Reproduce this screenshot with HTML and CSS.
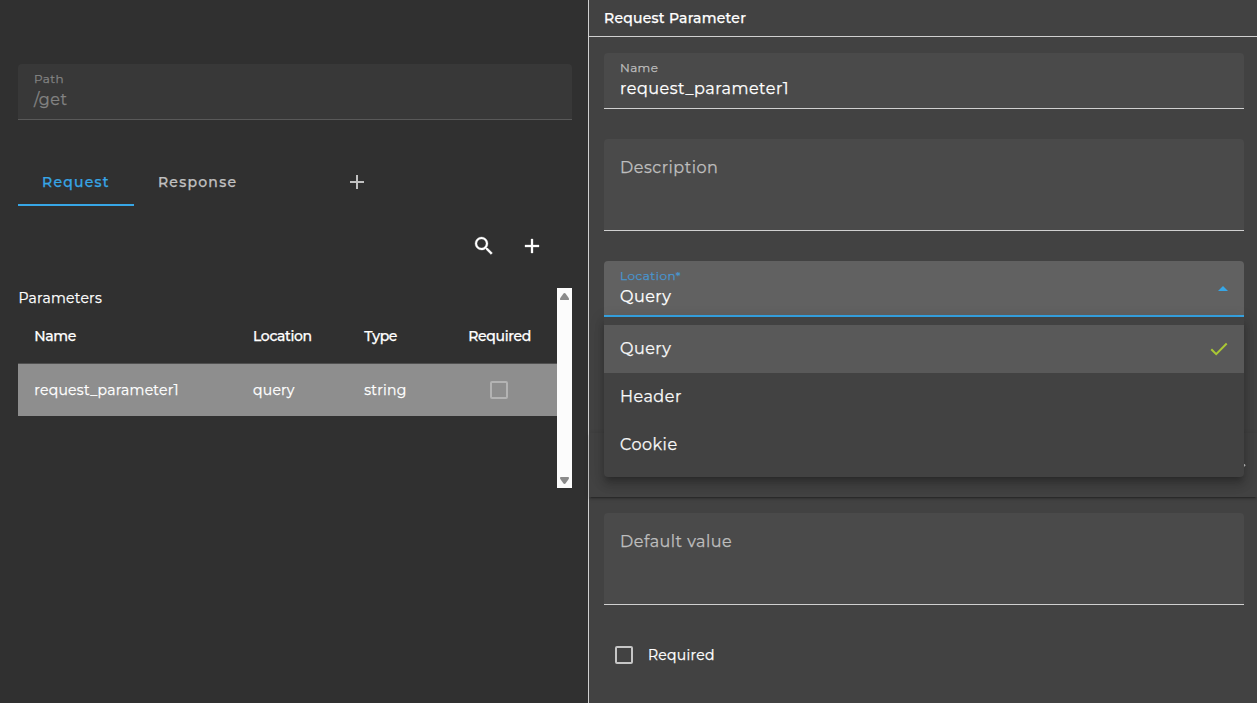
FILE: index.html
```html
<!DOCTYPE html>
<html lang="en">
<head>
<meta charset="utf-8">
<title>Request Parameter</title>
<link rel="stylesheet" href="styles.css">
</head>
<body>
<div class="app">
  <main class="editor">
    <div class="field field--disabled">
      <span class="field__label">Path</span>
      <span class="field__value">/get</span>
    </div>
    <nav class="tabs">
      <div class="tab tab--active">Request</div>
      <div class="tab">Response</div>
      <div class="tab tab--add">
        <svg class="icon" viewBox="0 0 24 24"><path d="M19 13h-6v6h-2v-6H5v-2h6V5h2v6h6v2z"/></svg>
      </div>
    </nav>
    <div class="toolbar">
      <svg class="icon icon--bold" viewBox="0 0 24 24"><path d="M15.5 14h-.79l-.28-.27A6.471 6.471 0 0 0 16 9.5 6.5 6.5 0 1 0 9.5 16c1.61 0 3.09-.59 4.23-1.57l.27.28v.79l5 4.99L20.49 19l-4.99-5zm-6 0C7.01 14 5 11.99 5 9.5S7.01 5 9.5 5 14 7.01 14 9.5 11.99 14 9.5 14z"/></svg>
      <svg class="icon icon--bold" viewBox="0 0 24 24"><path d="M19 13h-6v6h-2v-6H5v-2h6V5h2v6h6v2z"/></svg>
    </div>
    <section class="params">
      <div class="params__content">
        <div class="params__title">Parameters</div>
        <div class="row row--head">
          <span>Name</span><span>Location</span><span>Type</span><span>Required</span>
        </div>
        <div class="row row--selected">
          <span>request_parameter1</span><span>query</span><span>string</span><span><i class="checkbox checkbox--disabled"></i></span>
        </div>
      </div>
      <div class="scrollbar">
        <svg class="scrollbar__arrow" viewBox="0 0 9 7"><path d="M4.5 0Q5.2 0 5.7.7L8.7 5Q9.6 7 8 7H1Q-.6 7 .3 5L3.3.7Q3.8 0 4.5 0z"/></svg>
        <svg class="scrollbar__arrow scrollbar__arrow--down" viewBox="0 0 9 7"><path d="M4.5 0Q5.2 0 5.7.7L8.7 5Q9.6 7 8 7H1Q-.6 7 .3 5L3.3.7Q3.8 0 4.5 0z"/></svg>
      </div>
    </section>
  </main>
  <aside class="details">
    <header class="details__header">Request Parameter</header>
    <div class="details__body">
      <div class="field">
        <span class="field__label">Name</span>
        <span class="field__value">request_parameter1</span>
      </div>
      <div class="field field--area">Description</div>
      <div class="select">
        <div class="field field--focused">
          <span class="field__label">Location*</span>
          <span class="field__value">Query</span>
          <svg class="field__arrow" viewBox="0 0 10 5"><path d="M0 5l5-5 5 5z"/></svg>
        </div>
        <div class="menu">
          <div class="option option--selected">Query
            <svg class="option__check" viewBox="0 0 18 14"><path d="M1.3 7.2l4.9 4.9L16.7 1.5"/></svg>
          </div>
          <div class="option">Header</div>
          <div class="option">Cookie</div>
        </div>
      </div>
    </div>
    <div class="expander"><svg viewBox="0 0 10 6"><path d="M1 .5l4 4 4-4"/></svg></div>
    <div class="details__footer">
      <div class="field field--area">Default value</div>
      <div class="check-row"><i class="checkbox"></i>Required</div>
    </div>
  </aside>
</div>
</body>
</html>
```
FILE: styles.css
```css
* { box-sizing: border-box; }

body {
  margin: 0;
  background: #303030;
  color: #fff;
  font: 400 14px/20px Montserrat, "Open Sans", sans-serif;
  letter-spacing: .25px;
  -webkit-text-stroke: .25px currentColor;
}

.app { display: flex; height: 703px; overflow: hidden; }

.editor { width: 588px; padding: 64px 16px 0 18px; }

.icon { display: block; width: 24px; height: 24px; fill: currentColor; }
.icon--bold { stroke: currentColor; stroke-width: .3; }

/* Filled form fields */
.field {
  display: flex;
  flex-direction: column;
  position: relative;
  height: 56px;
  padding: 5px 16px 0;
  border-radius: 4px 4px 0 0;
  border-bottom: 1px solid #d0d0d0;
  background: #4a4a4a;
  font-size: 16px;
  letter-spacing: .5px;
}
.field__label { color: #bebebe; font-size: 12px; line-height: 20px; letter-spacing: .375px; }
.field__value { line-height: 22px; }
.field--disabled { background: #383838; border-color: #595959; color: #838383; }
.field--disabled .field__label { color: #838383; }
.field--area { height: 92px; padding-top: 19px; color: #bebebe; }
.field--focused { background: #616161; border-bottom: 2px solid #37a6e6; }
.field--focused .field__label { color: #4896d0; letter-spacing: .5px; }
.field__arrow { position: absolute; right: 16px; top: 25px; width: 10px; height: 5px; fill: #37a6e6; }

.tabs { display: flex; height: 48px; margin-top: 38px; }
.tab {
  padding: 14px 24px 0;
  color: #c1c1c1;
  font-weight: 500;
  letter-spacing: 1.25px;
}
.tab--active { color: #37a6e6; border-bottom: 2px solid #37a6e6; }
.tab--add { padding: 12px 0 0 84px; }

.toolbar { display: flex; justify-content: flex-end; gap: 24px; padding: 28px 28px 0 0; height: 82px; }

.params { display: flex; height: 200px; }
.params__content { flex: 1; }
.params__title { height: 20px; padding-left: .5px; }
.row {
  display: grid;
  grid-template-columns: 218.7px 111.3px 104px 1fr;
  align-items: center;
  height: 53px;
  padding-left: 16.3px;
}
.row--head { height: 55px; padding-top: 1px; font-weight: 500; letter-spacing: -.35px; }
.row--selected { background: #8e8e8e; border-top: 1px solid #505050; }
.row--selected .checkbox { margin-left: 21.7px; }

.checkbox { display: block; width: 18px; height: 18px; border: 2px solid #c6c6c6; border-radius: 2px; }
.checkbox--disabled { border-color: #b3b3b3; }

.scrollbar {
  display: flex;
  flex-direction: column;
  align-items: center;
  justify-content: space-between;
  width: 15px;
  padding: 5px 0 4px;
  background: #fcfcfc;
}
.scrollbar__arrow { width: 9px; height: 7px; fill: #8b8b8b; }
.scrollbar__arrow--down { transform: rotate(180deg); }

.details { flex: 1; border-left: 1px solid #d0d0d0; background: #424242; }
.details__header { height: 37px; padding: 8px 15px; border-bottom: 1px solid #d0d0d0; font-weight: 500; }
.details__body { display: flex; flex-direction: column; gap: 30px; padding: 16px 13px 0 15px; }

.select { position: relative; }
.menu {
  position: absolute;
  top: 56px;
  left: 0;
  z-index: 1;
  width: 100%;
  padding: 8px 0;
  border-radius: 0 0 4px 4px;
  background: #424242;
  box-shadow: 0 5px 5px -3px rgba(0, 0, 0, .2), 0 8px 10px 1px rgba(0, 0, 0, .14), 0 3px 14px 2px rgba(0, 0, 0, .12);
}
.option {
  display: flex;
  align-items: center;
  justify-content: space-between;
  height: 48px;
  padding: 0 16px;
  color: #f8f8f8;
  font-size: 16px;
  letter-spacing: .5px;
}
.option--selected { background: #595959; }
.option__check { width: 18px; height: 14px; fill: none; stroke: #aac834; stroke-width: 2; }

/* Collapsed panel partly covered by the open menu */
.expander {
  display: flex;
  align-items: center;
  justify-content: flex-end;
  height: 64px;
  margin-top: 116px;
  padding: 4px 11px 0 0;
  box-shadow: 0 3px 1px -2px rgba(0, 0, 0, .2), 0 2px 2px 0 rgba(0, 0, 0, .14), 0 1px 5px 0 rgba(0, 0, 0, .12);
}
.expander svg { width: 10px; height: 6px; fill: none; stroke: #c6c6c6; stroke-width: 2; }
.details__footer { padding: 16px 13px 0 15px; }
.check-row { display: flex; align-items: center; gap: 15px; margin-top: 40px; padding-left: 11px; }
```
